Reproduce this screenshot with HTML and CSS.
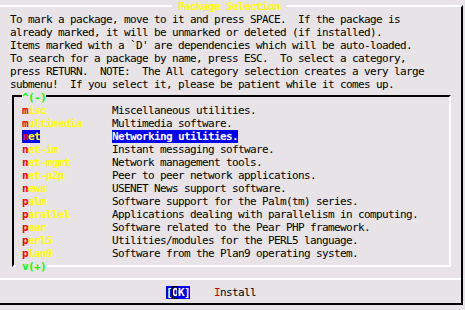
FILE: index.html
```html
<!DOCTYPE html>
<html lang="en">

<head>
    <meta charset="UTF-8">
    <meta name="viewport" content="width=device-width, initial-scale=1.0">
    <title>Package Selection</title>
    <link rel="stylesheet" href="styles.css">
</head>

<body>
    <div class="screen">
        <div class="dialog">
            <div class="title-row"><span class="title"> Package Selection </span></div>
            <div class="intro">
                <p>To mark a package, move to it and press SPACE.  If the package is</p>
                <p>already marked, it will be unmarked or deleted (if installed).</p>
                <p>Items marked with a `D' are dependencies which will be auto-loaded.</p>
                <p>To search for a package by name, press ESC.  To select a category,</p>
                <p>press RETURN.  NOTE:  The All category selection creates a very large</p>
                <p>submenu!  If you select it, please be patient while it comes up.</p>
            </div>
            <div class="menu">
                <div class="scroll scroll-up"><span>^(-)</span></div>
                <div class="item"><span class="name"><span class="label"><b>m</b>isc</span></span><span class="desc">Miscellaneous utilities.</span></div>
                <div class="item"><span class="name"><span class="label"><b>m</b>ultimedia</span></span><span class="desc">Multimedia software.</span></div>
                <div class="item current"><span class="name"><span class="label"><b>n</b>et</span></span><span class="desc">Networking utilities.</span></div>
                <div class="item"><span class="name"><span class="label"><b>n</b>et-im</span></span><span class="desc">Instant messaging software.</span></div>
                <div class="item"><span class="name"><span class="label"><b>n</b>et-mgmt</span></span><span class="desc">Network management tools.</span></div>
                <div class="item"><span class="name"><span class="label"><b>n</b>et-p2p</span></span><span class="desc">Peer to peer network applications.</span></div>
                <div class="item"><span class="name"><span class="label"><b>n</b>ews</span></span><span class="desc">USENET News support software.</span></div>
                <div class="item"><span class="name"><span class="label"><b>p</b>alm</span></span><span class="desc">Software support for the Palm(tm) series.</span></div>
                <div class="item"><span class="name"><span class="label"><b>p</b>arallel</span></span><span class="desc">Applications dealing with parallelism in computing.</span></div>
                <div class="item"><span class="name"><span class="label"><b>p</b>ear</span></span><span class="desc">Software related to the Pear PHP framework.</span></div>
                <div class="item"><span class="name"><span class="label"><b>p</b>erl5</span></span><span class="desc">Utilities/modules for the PERL5 language.</span></div>
                <div class="item"><span class="name"><span class="label"><b>p</b>lan9</span></span><span class="desc">Software from the Plan9 operating system.</span></div>
                <div class="scroll scroll-down"><span>v(+)</span></div>
            </div>
            <div class="separator"></div>
            <div class="buttons">
                <span class="btn btn-active">[<span class="cursor">O</span>K]</span>
                <span class="btn"><span class="hotkey">I</span>nstall</span>
            </div>
        </div>
    </div>
</body>

</html>
```

FILE: styles.css
```css
body {
    margin: 0;
    background-color: #e7e3e7;
    color: #000000;
    font-family: "DejaVu Sans Mono", monospace;
    font-size: 11px;
    line-height: 13px;
    letter-spacing: -0.6226px;
}

.screen {
    width: 465px;
    height: 310px;
    overflow: hidden;
}

/* outer dialog: light top edge, dark right and bottom */
.dialog {
    box-sizing: border-box;
    width: 466px;
    height: 300px;
    margin: 5px 0 0 -3px;
    border-top: 2px solid #FFFFFF;
    border-right: 2px solid #000000;
    border-bottom: 2px solid #000000;
}

.title-row {
    height: 13px;
    margin-top: -7px;
}

.title {
    margin-left: 175px;
    background-color: #e7e3e7;
    color: #FFFF00;
    font-weight: bold;
    white-space: pre;
}

.intro {
    padding-left: 13px;
}

.intro p {
    margin: 0;
    height: 13px;
    white-space: pre;
}

/* list box: dark top/left, light bottom/right */
.menu {
    box-sizing: border-box;
    width: 439px;
    margin: 4px 0 0 15px;
    border-top: 2px solid #000000;
    border-left: 2px solid #000000;
    border-right: 2px solid #FFFFFF;
    border-bottom: 2px solid #FFFFFF;
}

.scroll {
    height: 13px;
    color: #00FF00;
    font-weight: bold;
}

.scroll span {
    background-color: #e7e3e7;
}

.scroll-up {
    margin-top: -6px;
    padding-left: 8px;
}

.scroll-down {
    margin-bottom: -8px;
    padding-left: 2px;
}

.scroll-down span {
    padding-left: 6px;
}

.item {
    display: flex;
    height: 13px;
    padding-left: 8px;
    white-space: pre;
}

.name {
    flex: none;
    width: 90px;
    color: #FFFF00;
    font-weight: bold;
}

.name b {
    color: #FF0000;
}

.current .label,
.current .desc {
    background-color: #0000EE;
}

.current .desc {
    color: #FFFFFF;
    font-weight: bold;
}

.separator {
    height: 2px;
    margin-top: 11px;
    background-color: #FFFFFF;
}

.buttons {
    display: flex;
    height: 13px;
    margin-top: 6px;
    padding-left: 169px;
    white-space: pre;
}

.btn + .btn {
    margin-left: 24px;
}

.btn-active {
    background-color: #0000EE;
    color: #FFFFFF;
    font-weight: bold;
}

.cursor {
    outline: 1px solid #000000;
    outline-offset: -1px;
}

.hotkey {
    color: #CD0000;
}
```
